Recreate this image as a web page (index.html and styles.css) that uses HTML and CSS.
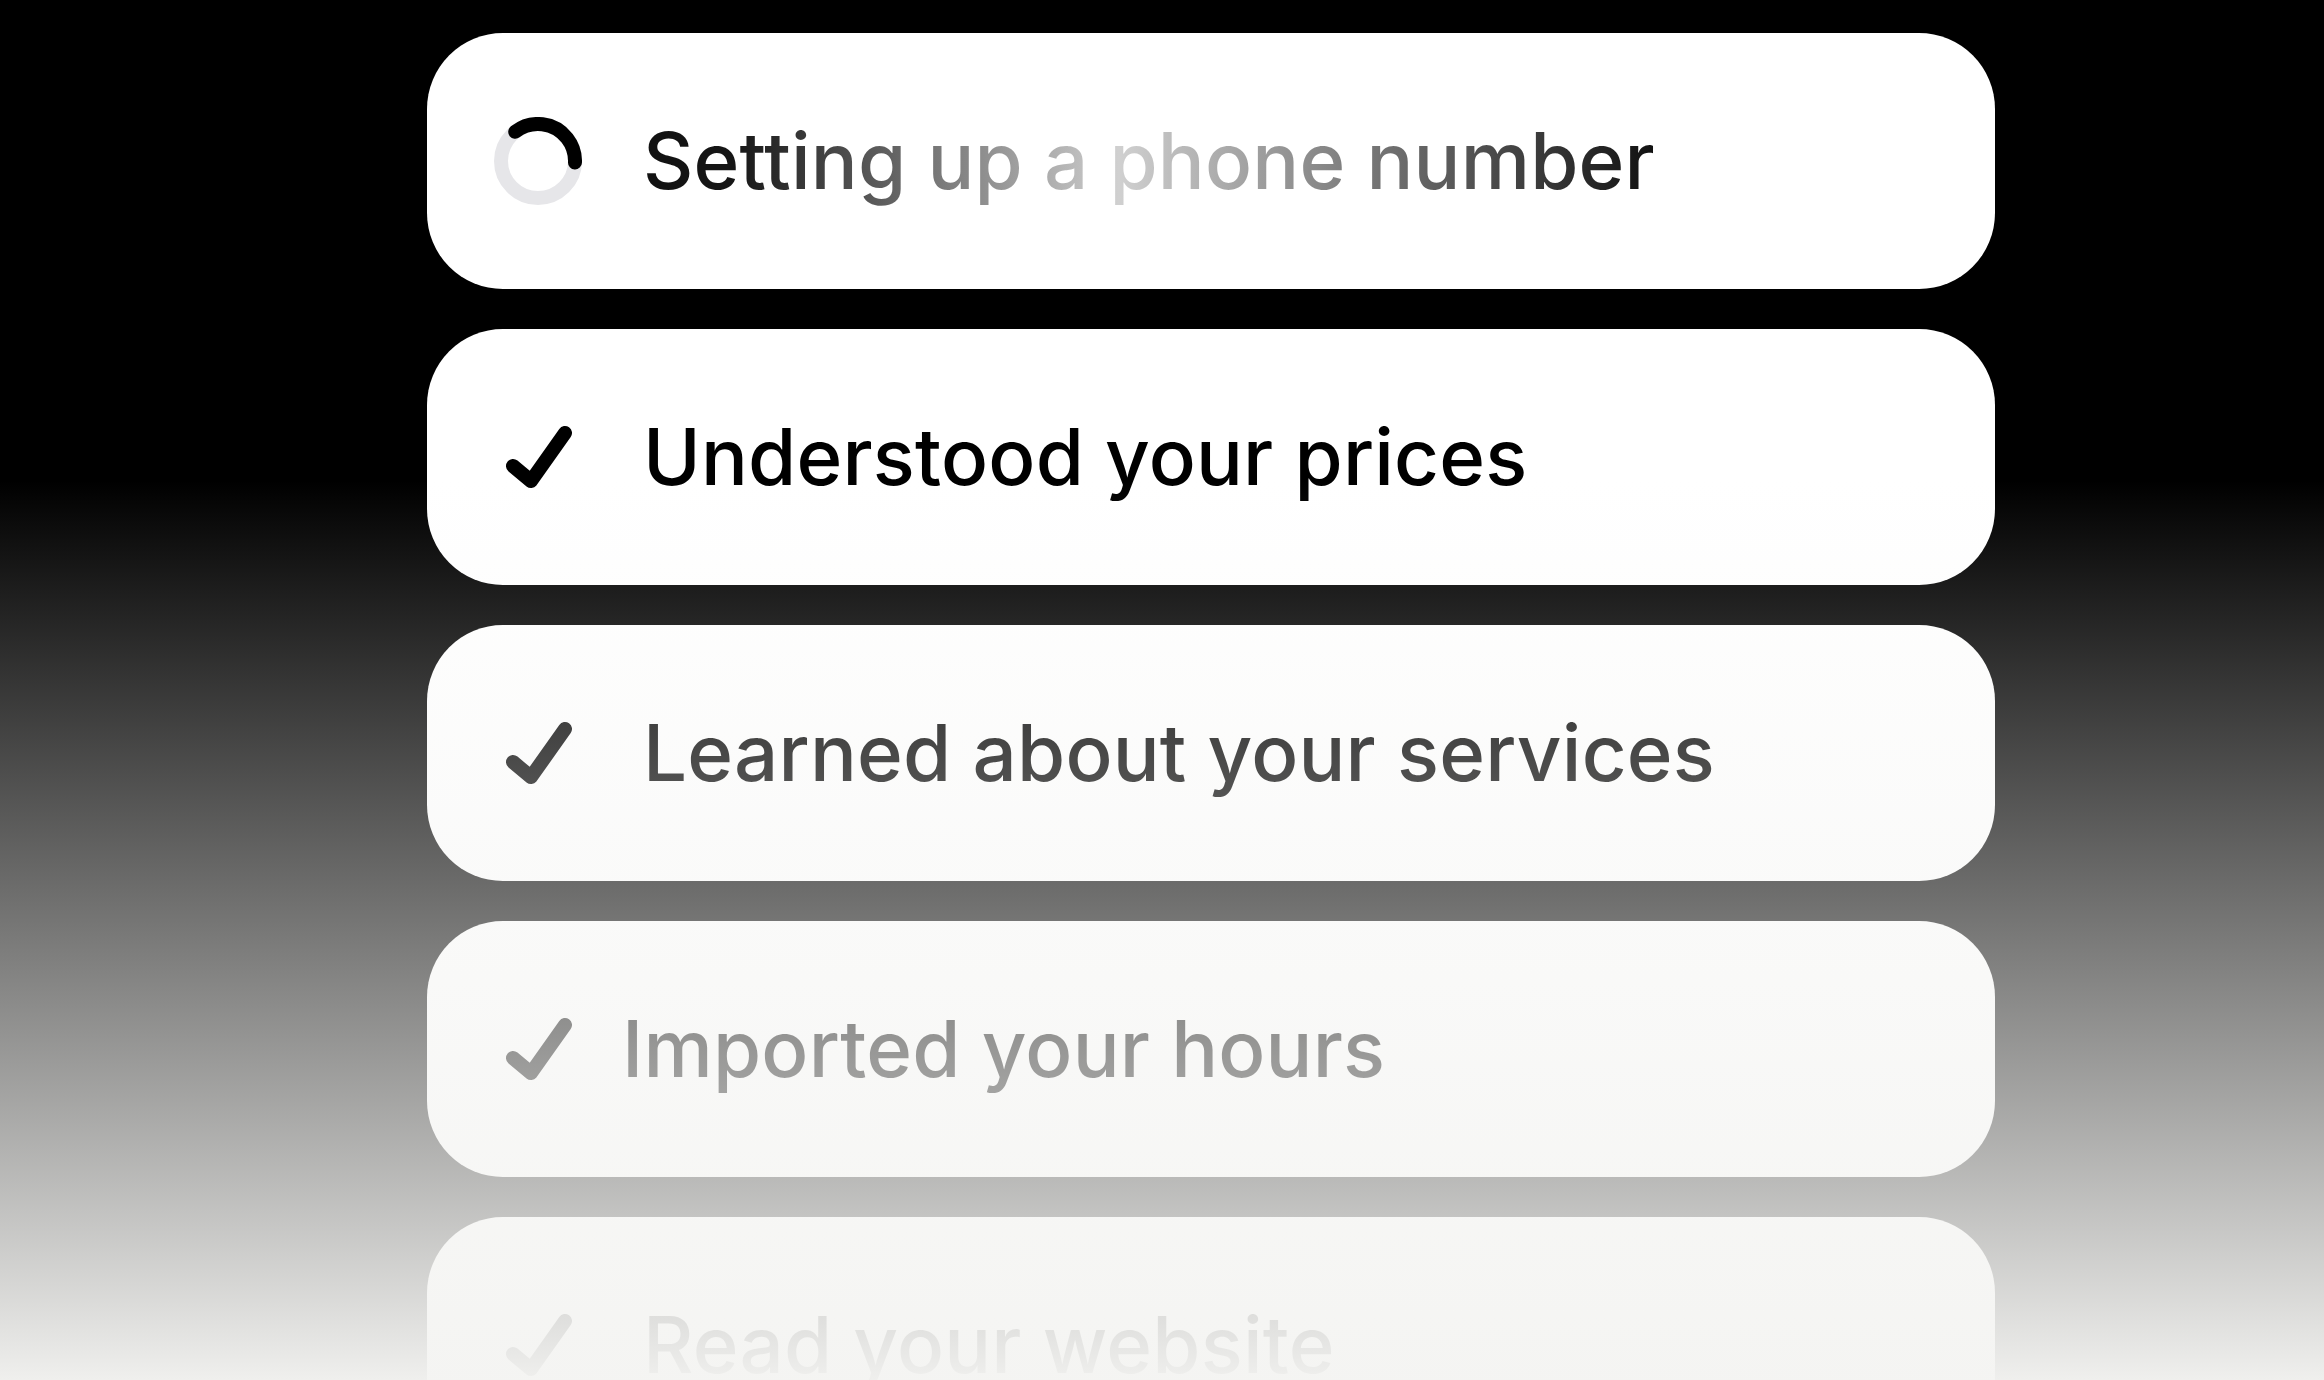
FILE: index.html
```html
<!DOCTYPE html>
<html lang="en">
<head>
<meta charset="utf-8">
<title>Setup progress</title>
<link rel="stylesheet" href="styles.css">
</head>
<body>
<main class="stage">
  <ul class="steps">
    <li class="step step-active">
      <span class="step-icon">
        <svg class="spinner" viewBox="0 0 88 88" width="88" height="88" aria-hidden="true">
          <circle class="spinner-track" cx="44" cy="44" r="37"></circle>
          <circle class="spinner-arc" cx="44" cy="44" r="37"></circle>
        </svg>
      </span>
      <span class="step-label shimmer">Setting up a phone number</span>
    </li>
    <li class="step">
      <span class="step-icon">
        <svg class="check" viewBox="0 0 88 88" width="88" height="88" aria-hidden="true"><path d="M19 53 L37 68 L71 20"></path></svg>
      </span>
      <span class="step-label">Understood your prices</span>
    </li>
    <li class="step">
      <span class="step-icon">
        <svg class="check" viewBox="0 0 88 88" width="88" height="88" aria-hidden="true"><path d="M19 53 L37 68 L71 20"></path></svg>
      </span>
      <span class="step-label">Learned about your services</span>
    </li>
    <li class="step">
      <span class="step-icon">
        <svg class="check" viewBox="0 0 88 88" width="88" height="88" aria-hidden="true"><path d="M19 53 L37 68 L71 20"></path></svg>
      </span>
      <span class="step-label step-label-shifted">Imported your hours</span>
    </li>
    <li class="step">
      <span class="step-icon">
        <svg class="check" viewBox="0 0 88 88" width="88" height="88" aria-hidden="true"><path d="M19 53 L37 68 L71 20"></path></svg>
      </span>
      <span class="step-label">Read your website</span>
    </li>
  </ul>
  <div class="fade" aria-hidden="true"></div>
</main>
</body>
</html>
```
FILE: styles.css
```css
html, body {
  margin: 0;
  padding: 0;
  background: #000;
}

body {
  width: 2324px;
  height: 1380px;
  overflow: hidden;
  font-family: Inter, "Noto Sans", "Liberation Sans", sans-serif;
}

.stage {
  position: relative;
  width: 2324px;
  height: 1380px;
  overflow: hidden;
}

.steps {
  list-style: none;
  margin: 0;
  padding: 33px 0 0 427px;
  display: flex;
  flex-direction: column;
  gap: 40px;
}

.step {
  width: 1568px;
  height: 256px;
  flex: none;
  box-sizing: border-box;
  border-radius: 76px;
  background: #fff;
  display: flex;
  align-items: center;
  padding-left: 67px;
  gap: 61px;
}

.step-icon {
  width: 88px;
  height: 88px;
  flex: none;
  display: flex;
}

.spinner-track {
  fill: none;
  stroke: #e6e6e9;
  stroke-width: 14;
}

.spinner-arc {
  fill: none;
  stroke: #000;
  stroke-width: 14;
  stroke-linecap: round;
  stroke-dasharray: 84 400;
  transform: rotate(232deg);
  transform-origin: 44px 44px;
}

.check path {
  fill: none;
  stroke: #000;
  stroke-width: 14;
  stroke-linecap: round;
  stroke-linejoin: round;
}

.step-label {
  font-size: 78px;
  font-weight: 500;
  color: #000;
  line-height: 1.3;
  letter-spacing: 0.2px;
  white-space: nowrap;
}

.step-label-shifted {
  margin-left: -21px;
}

.shimmer {
  background: linear-gradient(90deg, #111 0%, #161616 9%, #d0d0d0 47%, #3c3c3c 88%, #111 100%);
  -webkit-background-clip: text;
  background-clip: text;
  color: transparent;
}

.fade {
  position: absolute;
  inset: 0;
  pointer-events: none;
  background: linear-gradient(180deg, rgba(244, 244, 242, 0) 0px, rgba(244, 244, 242, 0) 480px, rgba(244, 244, 242, 0.98) 1380px);
}
```
